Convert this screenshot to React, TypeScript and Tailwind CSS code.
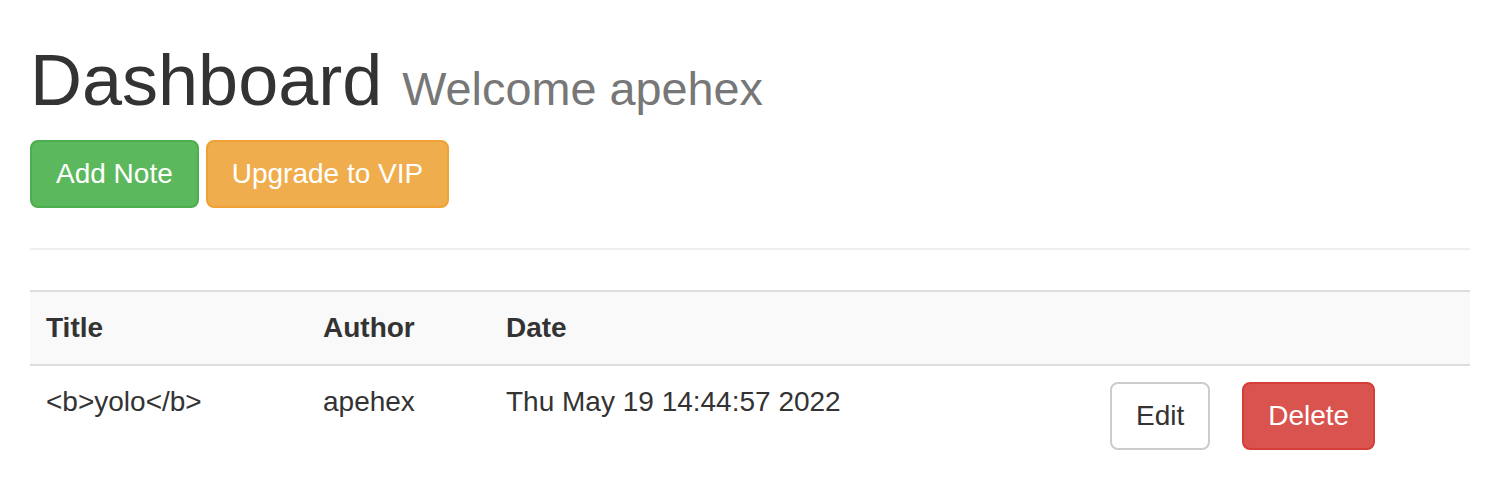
const notes = [
  { title: "<b>yolo</b>", author: "apehex", date: "Thu May 19 14:44:57 2022" },
];

export default function App() {
  return (
    <div className="bg-white px-[30px] font-['Liberation_Sans',Arial,sans-serif] text-[28px] leading-[40px] text-[#333]">
      <h1 className="mt-[41px] mb-[20px] text-[72px] leading-[1.1] font-normal">
        Dashboard <small className="text-[46.8px] leading-none text-[#777]">Welcome apehex</small>
      </h1>

      <div className="flex gap-[7px]">
        <button className="rounded-[8px] border-2 border-[#4cae4c] bg-[#5cb85c] px-[24px] py-[12px] text-white">
          Add Note
        </button>
        <button className="rounded-[8px] border-2 border-[#eea236] bg-[#f0ad4e] px-[24px] py-[12px] text-white">
          Upgrade to VIP
        </button>
      </div>

      <hr className="mt-[40px] mb-[40px] border-t-2 border-[#eee]" />

      <table className="w-full table-fixed border-collapse">
        <colgroup>
          <col className="w-[277px]" />
          <col className="w-[183px]" />
          <col className="w-[604px]" />
          <col />
        </colgroup>
        <thead>
          <tr className="bg-[#f9f9f9]">
            <th className="border-y-2 border-[#ddd] p-[16px] text-left font-bold">Title</th>
            <th className="border-y-2 border-[#ddd] p-[16px] text-left font-bold">Author</th>
            <th className="border-y-2 border-[#ddd] p-[16px] text-left font-bold">Date</th>
            <th className="border-y-2 border-[#ddd] p-[16px]"></th>
          </tr>
        </thead>
        <tbody>
          {notes.map((n) => (
            <tr key={n.date}>
              <td className="p-[16px] align-top">{n.title}</td>
              <td className="p-[16px] align-top">{n.author}</td>
              <td className="p-[16px] align-top">{n.date}</td>
              <td className="p-[16px] align-top">
                <div className="flex gap-[32px]">
                  <button className="rounded-[8px] border-2 border-[#ccc] bg-white px-[24px] py-[12px] text-[#333]">
                    Edit
                  </button>
                  <button className="rounded-[8px] border-2 border-[#d43f3a] bg-[#d9534f] px-[24px] py-[12px] text-white">
                    Delete
                  </button>
                </div>
              </td>
            </tr>
          ))}
        </tbody>
      </table>
    </div>
  );
}
